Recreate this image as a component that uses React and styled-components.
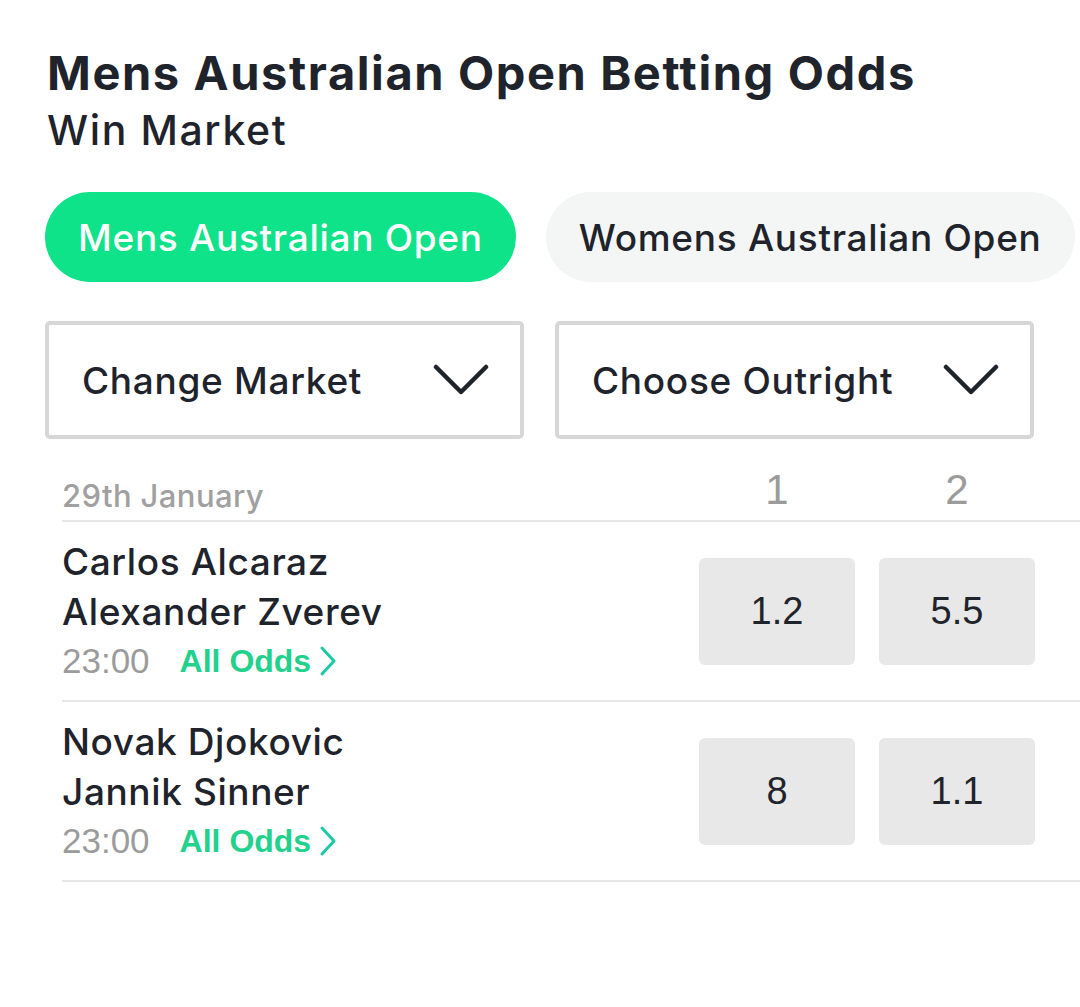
import React from "react";
import styled, { createGlobalStyle } from "styled-components";

const Global = createGlobalStyle`
  html, body { margin: 0; padding: 0; background: #fff; }
  body { font-family: "Inter", "Noto Sans", sans-serif; color: #1f232b; }
`;

const Page = styled.div`
  width: 1080px;
  height: 1007px;
  box-sizing: border-box;
  padding: 44px 0 0 47px;
  overflow: hidden;
`;

const Title = styled.h1`
  margin: 0;
  font-size: 47px;
  font-weight: 700;
  line-height: 58px;
  letter-spacing: 1.6px;
  color: #1f232b;
`;

const Subtitle = styled.h2`
  margin: 0;
  font-size: 41px;
  font-weight: 500;
  line-height: 56px;
  letter-spacing: 1.6px;
  color: #1f232b;
`;

const Tabs = styled.div`
  display: flex;
  gap: 30px;
  margin-top: 34px;
  margin-left: -2px;
`;

const Tab = styled.button`
  height: 90px;
  padding: 0 33px;
  border: none;
  border-radius: 45px;
  font-family: inherit;
  font-size: 37px;
  font-weight: 500;
  letter-spacing: 0.7px;
  white-space: nowrap;
  background: ${(p) => (p.$active ? "#0fe389" : "#f4f5f5")};
  color: ${(p) => (p.$active ? "#ffffff" : "#1f232b")};
`;

const Selects = styled.div`
  display: flex;
  gap: 31px;
  margin-top: 39px;
  margin-left: -2px;
`;

const Select = styled.div`
  width: 479px;
  height: 118px;
  box-sizing: border-box;
  border: 4px solid #d7d7d7;
  border-radius: 5px;
  display: flex;
  align-items: center;
  justify-content: space-between;
  padding: 0 31px 0 33px;
  font-size: 37px;
  font-weight: 500;
  letter-spacing: 0.7px;
`;

const Table = styled.div`
  margin-top: 21px;
  margin-left: 15px;
`;

const HeaderRow = styled.div`
  display: grid;
  grid-template-columns: 1fr 156px 156px;
  column-gap: 24px;
  align-items: end;
  height: 62px;
  border-bottom: 2px solid #e8e8e8;
  box-sizing: border-box;
  padding: 0 45px 6px 0;
`;

const DateLabel = styled.div`
  font-size: 31px;
  font-weight: 500;
  letter-spacing: 0.4px;
  color: #a0a0a0;
  padding-bottom: 0px;
`;

const ColLabel = styled.div`
  text-align: center;
  font-family: "Liberation Sans", Arial, sans-serif;
  font-size: 42px;
  font-weight: 400;
  color: #9b9b9b;
`;

const Row = styled.div`
  display: grid;
  grid-template-columns: 1fr 156px 156px;
  column-gap: 24px;
  align-items: center;
  height: 180px;
  border-bottom: 2px solid #e8e8e8;
  box-sizing: border-box;
  padding-right: 45px;
`;

const Names = styled.div`
  display: flex;
  flex-direction: column;
`;

const Name = styled.div`
  font-size: 37px;
  font-weight: 500;
  line-height: 50px;
  letter-spacing: 0.6px;
  color: #1f232b;
`;

const Meta = styled.div`
  display: flex;
  align-items: center;
  gap: 30px;
  line-height: 48px;
`;

const Time = styled.span`
  font-family: "Liberation Sans", Arial, sans-serif;
  font-size: 35px;
  color: #9b9b9b;
`;

const AllOdds = styled.a`
  display: flex;
  align-items: center;
  gap: 8px;
  font-family: "Liberation Sans", Arial, sans-serif;
  font-size: 32px;
  font-weight: 700;
  color: #22d18c;
  text-decoration: none;
`;

const OddBox = styled.div`
  height: 107px;
  border-radius: 6px;
  background: #e8e8e8;
  display: flex;
  align-items: center;
  justify-content: center;
  font-family: "Liberation Sans", Arial, sans-serif;
  font-size: 38px;
  color: #1f232b;
`;

const Chevron = () => (
  <svg width="56" height="34" viewBox="0 0 56 34" fill="none">
    <polyline points="3,4 28,29 53,4" stroke="#1f232b" strokeWidth="4.5" strokeLinecap="round" strokeLinejoin="round" />
  </svg>
);

const SmallChevron = () => (
  <svg width="18" height="32" viewBox="0 0 18 32" fill="none">
    <polyline points="3,3 15,16 3,29" stroke="#1cc9a6" strokeWidth="3" strokeLinecap="round" strokeLinejoin="round" />
  </svg>
);

const matches = [
  { a: "Carlos Alcaraz", b: "Alexander Zverev", time: "23:00", o1: "1.2", o2: "5.5" },
  { a: "Novak Djokovic", b: "Jannik Sinner", time: "23:00", o1: "8", o2: "1.1" },
];

export default function App() {
  return (
    <Page>
      <Global />
      <Title>Mens Australian Open Betting Odds</Title>
      <Subtitle>Win Market</Subtitle>
      <Tabs>
        <Tab $active>Mens Australian Open</Tab>
        <Tab>Womens Australian Open</Tab>
      </Tabs>
      <Selects>
        <Select>
          Change Market
          <Chevron />
        </Select>
        <Select>
          Choose Outright
          <Chevron />
        </Select>
      </Selects>
      <Table>
        <HeaderRow>
          <DateLabel>29th January</DateLabel>
          <ColLabel>1</ColLabel>
          <ColLabel>2</ColLabel>
        </HeaderRow>
        {matches.map((m) => (
          <Row key={m.a}>
            <Names>
              <Name>{m.a}</Name>
              <Name>{m.b}</Name>
              <Meta>
                <Time>{m.time}</Time>
                <AllOdds href="#">
                  All Odds
                  <SmallChevron />
                </AllOdds>
              </Meta>
            </Names>
            <OddBox>{m.o1}</OddBox>
            <OddBox>{m.o2}</OddBox>
          </Row>
        ))}
      </Table>
    </Page>
  );
}
